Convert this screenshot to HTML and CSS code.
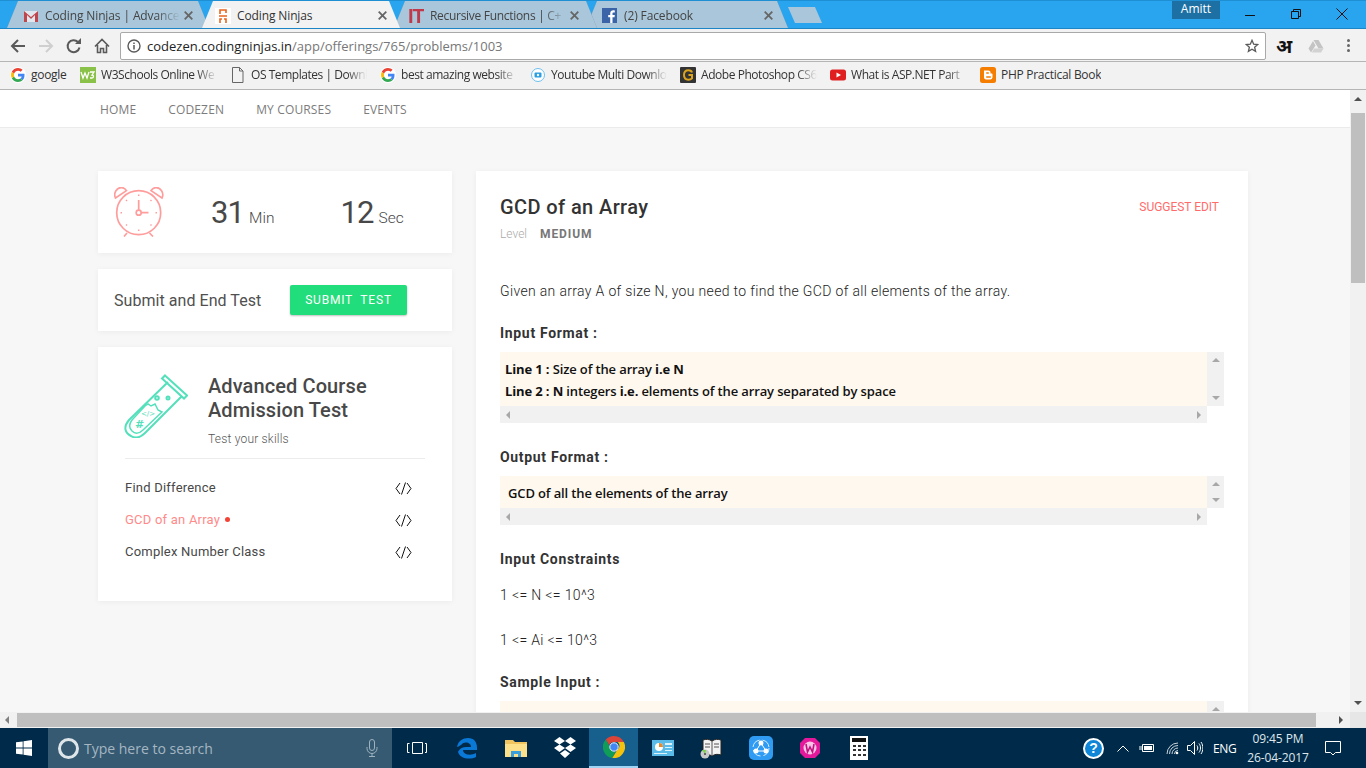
FILE: index.html
```html
<!DOCTYPE html>
<html lang="en">
<head>
    <meta charset="UTF-8">
    <meta name="viewport" content="width=device-width, initial-scale=1.0">
    <title>Coding Ninjas</title>
    <link rel="stylesheet" href="styles.css">
</head>
<body>
    <!-- browser title bar -->
    <div class="tabbar">
        <div class="tab tab-one">
            <svg class="favicon" viewBox="0 0 16 16"><path d="M1 3h14v11H1z" fill="#dfe8ee"/><path d="M1 14V3l7 6 7-6v11h-3V7L8 11 4 7v7z" fill="#c0464b"/></svg>
            <span class="tab-title">Coding Ninjas | Advance</span>
            <svg class="tab-close" viewBox="0 0 9 9"><path d="M.7.700l7.600 7.600M8.300.700L.7 8.300" stroke="#666" stroke-width="1.800"/></svg>
        </div>
        <div class="tab tab-two active">
            <svg class="favicon" viewBox="0 0 16 16"><rect width="16" height="16" fill="#fff"/><path d="M5 6V2h6v3M4 8h8M5 15v-4h2M11 15v-4H9" fill="none" stroke="#e8651f" stroke-width="1.600"/></svg>
            <span class="tab-title">Coding Ninjas</span>
            <svg class="tab-close" viewBox="0 0 9 9"><path d="M.7.700l7.600 7.600M8.300.700L.7 8.300" stroke="#666" stroke-width="1.800"/></svg>
        </div>
        <div class="tab tab-three">
            <span class="it-logo">IT</span>
            <span class="tab-title">Recursive Functions | C+</span>
            <svg class="tab-close" viewBox="0 0 9 9"><path d="M.7.700l7.600 7.600M8.300.700L.7 8.300" stroke="#666" stroke-width="1.800"/></svg>
        </div>
        <div class="tab tab-four">
            <svg class="favicon" viewBox="0 0 16 16"><rect width="15" height="15" fill="#3b64a8"/><path d="M10.500 15V9.200h2l.3-2.300h-2.300V5.500c0-.7.2-1.100 1.100-1.100h1.200v-2C12.500 2.300 11.900 2.300 11.300 2.300 9.500 2.300 8.200 3.400 8.200 5.300v1.600h-2v2.300h2V15z" fill="#fff"/></svg>
            <span class="tab-title">(2) Facebook</span>
            <svg class="tab-close" viewBox="0 0 9 9"><path d="M.7.700l7.600 7.600M8.300.700L.7 8.300" stroke="#666" stroke-width="1.800"/></svg>
        </div>
        <div class="new-tab"></div>
        <div class="profile">Amitt</div>
        <div class="window-controls">
            <svg viewBox="0 0 12 12"><path d="M1 7.500h10" stroke="#111" fill="none"/></svg>
            <svg viewBox="0 0 12 12"><path d="M1.500 3.500h7v7h-7zM3.500 3.500v-2h7v7h-2" stroke="#111" fill="none"/></svg>
            <svg viewBox="0 0 12 12"><path d="M.5.500l11 11M11.500.500l-11 11" stroke="#111" fill="none"/></svg>
        </div>
    </div>

    <!-- address bar -->
    <div class="toolbar">
        <svg class="tool" viewBox="0 0 16 16"><path d="M15 8H2M8 2L2 8l6 6" fill="none" stroke="#5a5a5a" stroke-width="2"/></svg>
        <svg class="tool" viewBox="0 0 16 16"><path d="M1 8h13M8 2l6 6-6 6" fill="none" stroke="#cfcfcf" stroke-width="2"/></svg>
        <svg class="tool" viewBox="0 0 16 16"><path d="M13.500 9.500A6 6 0 1 1 12 4" fill="none" stroke="#5a5a5a" stroke-width="2"/><path d="M9 6h6V0z" fill="#5a5a5a"/></svg>
        <svg class="tool" viewBox="0 0 16 16"><path d="M1 8.500L8 1.500l7 7M3.500 7v7.500h3v-4h3v4h3V7" fill="none" stroke="#5a5a5a" stroke-width="1.600"/></svg>
        <div class="omnibox">
            <svg class="info" viewBox="0 0 14 14"><circle cx="7" cy="7" r="6" fill="none" stroke="#5a5a5a" stroke-width="1.400"/><path d="M7 6v4.500M7 3.400v1.500" stroke="#5a5a5a" stroke-width="1.500"/></svg>
            <span class="url-host">codezen.codingninjas.in</span><span class="url-path">/app/offerings/765/problems/1003</span>
            <svg class="star" viewBox="0 0 16 16"><path d="M8 1.500l1.900 4.400 4.700.4-3.600 3.100 1.100 4.700L8 11.600l-4.100 2.500L5 9.400 1.400 6.300l4.700-.4z" fill="none" stroke="#5a5a5a" stroke-width="1.500"/></svg>
        </div>
        <span class="ext-hindi">अ</span>
        <svg class="ext-drive" viewBox="0 0 16 14"><path d="M5.500 1h5l5 8.500h-5zM5 2l2.500 4.500L3 13.500.5 9.500z" fill="#c4c4c4"/><path d="M3.800 13.500l2.400-4h9.300l-2.400 4z" fill="#d2d2d2"/></svg>
        <div class="menu-dots"><i></i><i></i><i></i></div>
    </div>

    <!-- bookmarks -->
    <div class="bookmarks">
        <a class="bookmark bm-google">
            <svg class="bm-icon" viewBox="0 0 16 16"><circle cx="8" cy="8" r="8" fill="#fff"/><path d="M14.500 8.200c0-.5 0-1-.1-1.400H8v2.700h3.700c-.2.900-.6 1.600-1.400 2.100l2.200 1.700c1.300-1.200 2-3 2-5.100z" fill="#4285f4"/><path d="M8 15c1.900 0 3.400-.6 4.500-1.700l-2.200-1.700c-.6.400-1.400.7-2.300.7-1.800 0-3.300-1.200-3.900-2.800L1.800 11.200C2.900 13.500 5.300 15 8 15z" fill="#34a853"/><path d="M4.100 9.500c-.3-.9-.3-2 0-2.900L1.800 4.800c-1 1.900-1 4.500 0 6.400z" fill="#fbbc05"/><path d="M8 3.800c1 0 1.900.4 2.600 1l2-2C11.400 1.700 9.800 1 8 1 5.300 1 2.900 2.500 1.800 4.800l2.300 1.800C4.700 5 6.200 3.800 8 3.800z" fill="#ea4335"/></svg>
            <span class="bm-text">google</span>
        </a>
        <a class="bookmark">
            <svg class="bm-icon" viewBox="0 0 16 16"><rect width="16" height="16" fill="#8ac249"/><path d="M1 5l2 6 2-5 2 5 2-6M10 5h4l-2 3c2 0 2 3 0 3h-2" fill="none" stroke="#fff" stroke-width="1.300"/></svg>
            <span class="bm-text fade">W3Schools Online We</span>
        </a>
        <a class="bookmark">
            <svg class="bm-icon" viewBox="0 0 16 16"><path d="M2.500 .5h7l3.500 3.500v11.500H2.500zM9.500 .5V4H13" fill="none" stroke="#666"/></svg>
            <span class="bm-text fade">OS Templates | Downl</span>
        </a>
        <a class="bookmark">
            <svg class="bm-icon" viewBox="0 0 16 16"><circle cx="8" cy="8" r="8" fill="#fff"/><path d="M14.500 8.200c0-.5 0-1-.1-1.400H8v2.700h3.700c-.2.900-.6 1.600-1.400 2.100l2.200 1.700c1.300-1.200 2-3 2-5.100z" fill="#4285f4"/><path d="M8 15c1.900 0 3.400-.6 4.500-1.700l-2.200-1.700c-.6.400-1.400.7-2.300.7-1.800 0-3.300-1.200-3.900-2.800L1.800 11.200C2.900 13.500 5.300 15 8 15z" fill="#34a853"/><path d="M4.100 9.500c-.3-.9-.3-2 0-2.900L1.800 4.800c-1 1.900-1 4.500 0 6.400z" fill="#fbbc05"/><path d="M8 3.800c1 0 1.900.4 2.600 1l2-2C11.400 1.700 9.800 1 8 1 5.300 1 2.900 2.500 1.800 4.800l2.300 1.800C4.700 5 6.200 3.800 8 3.800z" fill="#ea4335"/></svg>
            <span class="bm-text fade">best amazing website</span>
        </a>
        <a class="bookmark">
            <svg class="bm-icon" viewBox="0 0 16 16"><circle cx="8" cy="8" r="6.500" fill="#fff" stroke="#6cc0ef"/><rect x="4.500" y="5.500" width="7" height="5" rx="1" fill="#2a9fe0"/><circle cx="8" cy="8" r="1.200" fill="#fff"/></svg>
            <span class="bm-text fade">Youtube Multi Downlo</span>
        </a>
        <a class="bookmark">
            <svg class="bm-icon" viewBox="0 0 16 16"><rect width="16" height="16" rx="1" fill="#333"/><path d="M12 5.500C11.500 4 10.300 3.300 8.500 3.300 5.800 3.300 4 5.200 4 8s1.700 4.700 4.400 4.700c1.500 0 2.800-.5 3.600-1.300V8H8.500" fill="none" stroke="#dca31f" stroke-width="2"/></svg>
            <span class="bm-text fade">Adobe Photoshop CS6</span>
        </a>
        <a class="bookmark">
            <svg class="bm-icon" viewBox="0 0 16 16"><rect y="2.500" width="16" height="11" rx="2.500" fill="#e02020"/><path d="M6.500 5.500L11 8l-4.500 2.500z" fill="#fff"/></svg>
            <span class="bm-text fade">What is ASP.NET Part</span>
        </a>
        <a class="bookmark">
            <svg class="bm-icon" viewBox="0 0 16 16"><rect width="16" height="16" rx="2.500" fill="#f57d00"/><path d="M4 3.500h4.500c1 0 2 .8 2 1.800v1.200h1c.5 0 1 .3 1 .8v3c0 1.100-.9 2.200-2.200 2.200H6c-1.200 0-2-.9-2-2.200z" fill="#fff"/><path d="M6.200 6h2.600M6.200 10h4.600" stroke="#f57d00" stroke-width="1.300"/></svg>
            <span class="bm-text">PHP Practical Book</span>
        </a>
    </div>

    <!-- page area with its scrollbars -->
    <div class="viewport">
        <div class="page">
            <nav class="site-nav">
                <a>HOME</a>
                <a>CODEZEN</a>
                <a>MY COURSES</a>
                <a>EVENTS</a>
            </nav>
            <div class="content">
                <aside class="sidebar">
                    <div class="card timer-card">
                        <svg class="clock" viewBox="0 0 50 50" fill="none" stroke="#ff9d9d" stroke-width="1.700">
                            <circle cx="24.700" cy="25.700" r="22"/>
                            <path d="M1.500 11C-1 6 3 0 8 .6c2 .2 3.500 1.500 4.500 3zM48 11c2.500-5-1.500-11-6.500-10.400-2 .2-3.500 1.500-4.500 3zM13 46l-3 3.500M35.500 46l3.500 3.500M24.700 13v10M27 25.700h7.500"/>
                            <circle cx="24.700" cy="25.700" r="2.500"/>
                            <path d="M24.700 7.500v1.500M24.700 42.500v1.500M6.500 25.700H8M41.500 25.700H43M12 13l1 1M37.500 13l-1 1M12 38.500l1-1M37.500 38.500l-1-1" stroke-width="1.500"/>
                        </svg>
                        <div class="timer-values">
                            <span class="count">31</span><span class="unit">Min</span>
                            <span class="count count-sec">12</span><span class="unit">Sec</span>
                        </div>
                    </div>
                    <div class="card submit-card">
                        <span class="submit-label">Submit and End Test</span>
                        <button class="submit-btn">SUBMIT&nbsp; TEST</button>
                    </div>
                    <div class="card course-card">
                        <div class="course-head">
                            <svg class="tube" viewBox="0 0 64 64" fill="none" stroke="#54e0bb" stroke-width="2">
                                <path d="M41 1.500l22 20-3 3-22-20zM44 8L5 46C-1 53 1 59 7 62c5 3 10 1 14-3l37-37"/>
                                <path d="M8 46l13-14 3-2 3 2 4-2 3 6 4 2-19 18c-4 4-8 4-11 1-3-3-3-7 0-11z" stroke-width="1.500"/>
                                <circle cx="33" cy="24" r="1.800"/><circle cx="44" cy="24" r="1.500"/>
                                <text class="tube-mark" x="11" y="54">#</text>
                                <text class="tube-code" x="17" y="42">&lt;/&gt;</text>
                            </svg>
                            <div>
                                <h2 class="course-title">Advanced Course Admission Test</h2>
                                <p class="course-sub">Test your skills</p>
                            </div>
                        </div>
                        <ul class="problem-list">
                            <li><span>Find Difference</span><svg class="code-mark" viewBox="0 0 17 13"><path d="M5 1L1 6.500 5 12M10.500 .5L6.500 12.500M12 1l4 5.500-4 5.500" fill="none" stroke="#111"/></svg></li>
                            <li class="current"><span>GCD of an Array <i class="dot"></i></span><svg class="code-mark" viewBox="0 0 17 13"><path d="M5 1L1 6.500 5 12M10.500 .5L6.500 12.500M12 1l4 5.500-4 5.500" fill="none" stroke="#111"/></svg></li>
                            <li><span>Complex Number Class</span><svg class="code-mark" viewBox="0 0 17 13"><path d="M5 1L1 6.500 5 12M10.500 .5L6.500 12.500M12 1l4 5.500-4 5.500" fill="none" stroke="#111"/></svg></li>
                        </ul>
                    </div>
                </aside>

                <main class="card problem">
                    <div class="problem-head">
                        <h1>GCD of an Array</h1>
                        <a class="suggest">SUGGEST EDIT</a>
                    </div>
                    <div class="level"><span class="level-label">Level</span><span class="level-value">MEDIUM</span></div>
                    <p class="statement">Given an array A of size N, you need to find the GCD of all elements of the array.</p>

                    <h3 class="heading">Input Format :</h3>
                    <div class="code-box">
                        <div class="code-text tall">
                            <div><b>Line 1 :</b> Size of the array <b>i.e N</b></div>
                            <div><b>Line 2 : N</b> integers <b>i.e.</b> elements of the array separated by space</div>
                        </div>
                        <div class="vbar"><i class="arrow up"></i><i class="arrow down"></i></div>
                        <div class="hbar"><i class="arrow left"></i><i class="arrow right"></i></div>
                    </div>

                    <h3 class="heading">Output Format :</h3>
                    <div class="code-box">
                        <div class="code-text wide-pad">GCD of all the elements of the array</div>
                        <div class="vbar"><i class="arrow up"></i><i class="arrow down"></i></div>
                        <div class="hbar"><i class="arrow left"></i><i class="arrow right"></i></div>
                    </div>

                    <h3 class="heading">Input Constraints</h3>
                    <p class="constraint first">1 &lt;= N &lt;= 10^3</p>
                    <p class="constraint second">1 &lt;= Ai &lt;= 10^3</p>

                    <h3 class="heading sample">Sample Input :</h3>
                    <div class="code-box">
                        <div class="code-text tall"></div>
                        <div class="vbar"><i class="arrow up"></i><i class="arrow down"></i></div>
                    </div>
                </main>
            </div>
        </div>
        <div class="vscroll">
            <i class="arrow up dark"></i>
            <div class="vthumb"></div>
            <i class="arrow down dark"></i>
        </div>
    </div>
    <div class="hscroll">
        <i class="arrow left dark"></i>
        <div class="hthumb"></div>
        <i class="arrow right dark"></i>
        <div class="corner"></div>
    </div>

    <!-- windows taskbar -->
    <div class="taskbar">
        <div class="start">
            <svg viewBox="0 0 16 16" width="16" height="16"><path d="M0 2.300l6.700-.9v6.200H0zM7.500 1.300L16 0v7.600H7.500zM0 8.400h6.700v6.200L0 13.700zM7.500 8.400H16V16l-8.500-1.200z" fill="#fff"/></svg>
        </div>
        <div class="search">
            <span class="cortana"></span>
            <span class="search-text">Type here to search</span>
            <svg class="mic" viewBox="0 0 12 18" fill="none" stroke="#9fb2bf"><rect x="3.500" y=".5" width="5" height="11" rx="2.500"/><path d="M1 8v1.500a5 5 0 0 0 10 0V8M6 14.500v3M3 17.500h6"/></svg>
        </div>
        <div class="task-view">
            <svg viewBox="0 0 20 14" width="20" height="14" fill="none" stroke="#fff"><path d="M5.500 1.500h10v11h-10zM2.500 2.500H.5v9h2M18 2.500h1.500v9H18"/></svg>
        </div>
        <div class="task-icon">
            <svg viewBox="0 0 22 22" width="22" height="22"><path d="M1 10C2 4 7 1 12 1c6 0 9 4 9 10v2H7c0 5 8 6 13 3v4c-6 3-16 2-18-5 0 0 2-5 8-5h5c0-5-7-6-10-2-2 1-3 2-4 2z" fill="#0a78d7"/></svg>
        </div>
        <div class="task-icon">
            <svg viewBox="0 0 22 20" width="22" height="20"><path d="M0 2h8l2 2h12v15H0z" fill="#f0c45f"/><path d="M0 6h22v13H0z" fill="#fde08a"/><path d="M6 19v-6h10v6h-3v-3H9v3z" fill="#3a9fdc"/></svg>
        </div>
        <div class="task-icon">
            <svg viewBox="0 0 24 22" width="24" height="22"><path d="M6.500 0L12 4 6.500 7.500 1 4zM17.500 0L23 4l-5.500 3.500L12 4zM6.500 15L1 11l5.500-3.500L12 11zM17.500 15L12 11l5.500-3.500L23 11zM12 13l5 3.500L12 21l-5-4.500z" fill="#fff"/></svg>
        </div>
        <div class="task-icon running">
            <svg viewBox="0 0 22 22" width="22" height="22"><path d="M11 0a11 11 0 0 1 9.800 6H11a5 5 0 0 0-4.800 3.300L2.800 3.600A11 11 0 0 1 11 0z" fill="#db4437"/><path d="M2.800 3.600l4.300 7.700a5 5 0 0 0 5.500 4.500L9.300 21.900A11 11 0 0 1 2.800 3.600z" fill="#0f9d58"/><path d="M20.800 6A11 11 0 0 1 9.300 21.900l4.900-7.900A5 5 0 0 0 14.800 6z" fill="#f4c20d"/><circle cx="11" cy="11" r="4.200" fill="#4285f4" stroke="#e8eef5"/></svg>
        </div>
        <div class="task-icon">
            <svg viewBox="0 0 22 16" width="22" height="16"><rect width="22" height="16" fill="#5bbbe8"/><circle cx="7" cy="7" r="4" fill="#fff"/><path d="M7 7V3a4 4 0 0 1 4 4z" fill="#e88a2e"/><path d="M13 3h7v2h-7zM13 7h7v1h-7zM13 10h7v1h-7zM2 13h13v1H2z" fill="#dff3fc"/></svg>
        </div>
        <div class="task-icon">
            <svg viewBox="0 0 24 24" width="24" height="24"><path d="M3 4c3-1 6-1 9 1 3-2 6-2 9-1v15c-3-1-6-1-9 1-3-2-6-2-9-1z" fill="#f3f3f3" stroke="#222"/><path d="M12 5v15M5 8h5M5 11h5M14 8h5M14 11h5" stroke="#555"/><circle cx="5" cy="18" r="4.500" fill="#c9c9c9"/><path d="M5 18L2 14h4z" fill="#7ed04a"/><circle cx="5" cy="18" r="1" fill="#444"/></svg>
        </div>
        <div class="task-icon">
            <svg viewBox="0 0 24 24" width="24" height="24"><rect width="24" height="24" rx="5" fill="#2f9bf2"/><circle cx="12" cy="12" r="8" fill="none" stroke="#d5ecff" stroke-dasharray="10 3"/><circle cx="12" cy="7" r="2.500" fill="#fff"/><circle cx="7" cy="15" r="2.500" fill="#fff"/><circle cx="17" cy="15" r="2.500" fill="#fff"/><path d="M12 7L7 15h10z" fill="none" stroke="#fff"/></svg>
        </div>
        <div class="task-icon">
            <svg viewBox="0 0 22 22" width="22" height="22"><path d="M6 1h10l5 5v10l-5 5H6l-5-5V6z" fill="#e5179b"/><circle cx="11" cy="11" r="6.500" fill="#f9c4e5"/><path d="M7 7l1.500 8L11 10l2.500 5L15 7" fill="none" stroke="#c2107f" stroke-width="1.600"/></svg>
        </div>
        <div class="task-icon">
            <svg viewBox="0 0 18 24" width="18" height="24"><rect width="18" height="24" fill="#fff"/><rect x="2" y="2" width="14" height="4" fill="#111"/><path d="M3 9h3v2H3zM8 9h3v2H8zM13 9h3v2h-3zM3 13h3v2H3zM8 13h3v2H8zM13 13h3v2h-3zM3 18h3v2H3zM8 18h3v2H8zM13 18h3v2h-3z" fill="#333"/></svg>
        </div>

        <div class="tray">
            <span class="tray-help">?</span>
            <svg class="tray-up" viewBox="0 0 12 7"><path d="M.5 6.500L6 1l5.500 5.500" fill="none" stroke="#fff"/></svg>
            <svg class="tray-battery" viewBox="0 0 16 10" fill="none" stroke="#fff"><path d="M3.500 1.500h11v7h-11zM0 4h3M0 6h3"/><rect x="5" y="3" width="8" height="4" fill="#fff" stroke="none"/></svg>
            <svg class="tray-wifi" viewBox="0 0 14 13" fill="none" stroke="#c8d3da"><path d="M1 12A11 11 0 0 1 12 1M3.500 12A8.500 8.500 0 0 1 12 3.500M6 12A6 6 0 0 1 12 6M8.500 12A3.500 3.500 0 0 1 12 8.500"/><circle cx="11" cy="11" r="1.300" fill="#fff" stroke="none"/></svg>
            <svg class="tray-sound" viewBox="0 0 16 14" fill="none" stroke="#fff"><path d="M.5 4.500h3l4-4v13l-4-4h-3zM10 4.500c1 1.500 1 3.500 0 5M12 2.500c2 2.500 2 6.500 0 9M14 1c2.500 3.500 2.500 8.500 0 12"/></svg>
            <span class="tray-lang">ENG</span>
            <div class="tray-clock"><span>09:45 PM</span><span>26-04-2017</span></div>
            <svg class="tray-note" viewBox="0 0 16 15" fill="none" stroke="#fff"><path d="M.5.500h15v11h-5l-2.500 2.500-2.500-2.500h-5z"/></svg>
        </div>
    </div>
</body>
</html>
```

FILE: styles.css
```css
* { box-sizing: border-box; }
html, body { height: 100%; }
body { margin: 0; width: 1366px; height: 768px; overflow: hidden; display: flex; flex-direction: column; font-family: Roboto, sans-serif; background: #f7f7f7; color: #484848; }
h1, h2, h3, p, ul { margin: 0; padding: 0; }
ul { list-style: none; }
i { display: block; }

/* browser tabs */
.tabbar { height: 29px; flex: none; display: flex; align-items: flex-end; background: #29a5f0; border-top: 1px solid #1f8fd3; border-bottom: 1px solid #1c85c6; padding-left: 7px; font-family: "Open Sans", sans-serif; font-size: 12px; color: #444; }
.tab { height: 27px; display: flex; align-items: center; position: relative; padding-top: 2px; filter: drop-shadow(0 0 .5px #6d8ba0); }
.tab::before { content: ""; position: absolute; inset: 0; z-index: -1; background: #a9c6da; clip-path: polygon(0 100%, 11px 0, calc(100% - 11px) 0, 100% 100%); }
.tab-one { width: 202px; padding-left: 16px; padding-right: 16px; z-index: 1; }
.tab-two { width: 198px; margin-left: -7px; padding-left: 13px; padding-right: 13px; z-index: 3; }
.tab-three { width: 203px; margin-left: -6px; padding-left: 14px; padding-right: 18px; z-index: 2; }
.tab-four { width: 202px; margin-left: -11px; padding-left: 16px; padding-right: 15px; z-index: 1; }
.active { color: #333; filter: none; }
.active::before { background: #f2f2f2; }
.favicon { width: 16px; height: 16px; flex: none; }
.it-logo { width: 16px; flex: none; font: bold 20px/16px "Liberation Sans", sans-serif; color: #c0394b; letter-spacing: -1px; overflow: hidden; }
.tab-title { flex: 1; margin-left: 6px; white-space: nowrap; overflow: hidden; letter-spacing: -.12px; }
.tab-three .tab-title { letter-spacing: -.3px; }
.tab-one .tab-title, .tab-three .tab-title { -webkit-mask-image: linear-gradient(to left, transparent 0, #000 24px); mask-image: linear-gradient(to left, transparent 0, #000 24px); }
.tab-close { width: 9px; height: 9px; flex: none; margin-left: 4px; }
.new-tab { width: 34px; height: 16px; margin-bottom: 5px; background: #a9c6da; clip-path: polygon(0 0, calc(100% - 7px) 0, 100% 100%, 7px 100%); }
.profile { align-self: flex-start; width: 48px; height: 18px; margin-left: 350px; background: #1d70a3; color: #fff; text-align: center; line-height: 16px; }
.window-controls { align-self: flex-start; display: flex; margin-left: 24px; padding-top: 7px; gap: 34px; }
.window-controls svg { width: 12px; height: 12px; }

/* address bar */
.toolbar { height: 33px; flex: none; display: flex; align-items: center; background: #f2f2f2; padding-left: 10px; }
.tool { width: 16px; height: 16px; margin-right: 12px; flex: none; }
.omnibox { width: 1146px; height: 28px; margin-left: -2px; background: #fff; border: 1px solid #a9a9a9; border-radius: 2px; display: flex; align-items: center; padding: 1px 6px 0; font-family: "Open Sans", sans-serif; font-size: 13px; }
.info { width: 14px; height: 14px; margin-right: 6px; flex: none; }
.url-host { color: #222; }
.url-path { color: #777; }
.star { width: 14px; height: 14px; margin-left: auto; }
.ext-hindi { margin-left: 10px; width: 17px; font: bold 19px/20px "Noto Sans", "DejaVu Sans", sans-serif; color: #111; }
.ext-drive { width: 16px; height: 14px; margin-left: 15px; }
.menu-dots { margin-left: 23px; display: flex; flex-direction: column; gap: 2px; }
.menu-dots i { width: 3px; height: 3px; border-radius: 50%; background: #666; }

/* bookmarks */
.bookmarks { height: 29px; flex: none; display: flex; align-items: center; background: #f2f2f2; border-top: 1px solid #b5b5b5; border-bottom: 1px solid #b5b5b5; padding: 0 0 2px 10px; font-family: "Open Sans", sans-serif; font-size: 12px; letter-spacing: -.28px; color: #333; margin-top: -1px; }
.bookmark { width: 150px; display: flex; align-items: center; white-space: nowrap; flex: none; }
.bm-icon { width: 16px; height: 16px; flex: none; margin-right: 5px; }
.bm-text { display: block; overflow: hidden; }
.fade { width: 116px; letter-spacing: -.45px; -webkit-mask-image: linear-gradient(to left, transparent 0, #000 20px); mask-image: linear-gradient(to left, transparent 0, #000 20px); }
.bm-google { width: 70px; }

/* page */
.viewport { flex: 1; display: flex; min-height: 0; }
.page { flex: 1; overflow: hidden; }
.site-nav { height: 38px; display: flex; align-items: center; gap: 32px; padding: 2px 0 0 100px; background: #fff; border-bottom: 1px solid #ebebeb; font-family: "Open Sans", sans-serif; font-size: 12px; letter-spacing: .15px; color: #7c7c7c; }
.content { display: flex; align-items: flex-start; gap: 24px; padding: 43px 0 0 98px; }
.card { background: #fff; box-shadow: 0 1px 6px rgba(0, 0, 0, .05); }
.sidebar { width: 354px; display: flex; flex-direction: column; gap: 16px; }

.timer-card { height: 82px; display: flex; align-items: flex-start; padding: 16px 0 0 16px; }
.clock { width: 50px; height: 50px; flex: none; }
.timer-values { display: flex; align-items: baseline; margin: 7px 0 0 47px; }
.count { font-size: 31px; color: #484848; letter-spacing: -.9px; }
.count-sec { margin-left: 66px; }
.unit { font-size: 15.500px; font-weight: 300; margin-left: 5px; color: #484848; }

.submit-card { height: 62px; display: flex; align-items: center; padding-left: 16px; }
.submit-label { font-size: 16px; width: 176px; letter-spacing: .05px; color: #505050; }
.submit-btn { width: 117px; height: 30px; border: none; border-radius: 2px; background: #22dd7b; color: #fff; font: 12px Roboto, sans-serif; letter-spacing: .8px; box-shadow: 0 1px 2px rgba(0, 0, 0, .25); }

.course-card { height: 254px; padding: 27px 27px 0; }
.course-head { display: flex; gap: 19px; padding-bottom: 11px; border-bottom: 1px solid #ececec; }
.tube { width: 64px; height: 64px; flex: none; margin-left: -1px; margin-right: 1px; }
.tube-mark { font: 700 11px "DejaVu Sans", sans-serif; fill: #54e0bb; stroke: none; }
.tube-code { font: 7px "DejaVu Sans", sans-serif; fill: #54e0bb; stroke: none; }
.course-title { width: 180px; font-size: 20px; font-weight: 500; line-height: 24px; color: #484848; letter-spacing: .1px; }
.course-sub { font-size: 12px; font-weight: 300; margin-top: 9px; line-height: 16px; color: #555; letter-spacing: .2px; }
.problem-list { margin-top: 12px; }
.problem-list li { height: 32px; display: flex; align-items: center; justify-content: space-between; padding-right: 13px; font-size: 13px; letter-spacing: .22px; }
.current { color: #ff8a8a; }
.dot { display: inline-block; width: 5px; height: 5px; margin-left: 1px; border-radius: 50%; background: #f44336; vertical-align: 2px; }
.code-mark { width: 17px; height: 13px; flex: none; margin-top: 2px; }

.problem { width: 772px; height: 600px; padding: 24px 24px 0; }
.problem-head { display: flex; justify-content: space-between; align-items: center; padding-right: 5px; }
.problem-head h1 { font-size: 20px; font-weight: 500; line-height: 24px; color: #333; letter-spacing: .4px; }
.suggest { font-size: 12px; color: #ff6b6b; letter-spacing: -.03px; }
.level { margin-top: 7px; font-size: 12px; line-height: 16px; }
.level-label { color: #aaa; font-weight: 300; }
.level-value { margin-left: 13px; font-weight: 700; color: #777; letter-spacing: .9px; }
.statement { margin-top: 39px; font-size: 14px; line-height: 20px; font-weight: 300; color: #222; letter-spacing: .34px; }
.heading { margin-top: 24px; font-size: 14px; font-weight: 700; line-height: 20px; color: #333; letter-spacing: .68px; }
.statement + .heading, .sample { margin-top: 22px; }
.code-box { width: 724px; margin-top: 9px; display: grid; grid-template-columns: 707px 17px; font-family: "Open Sans", sans-serif; font-size: 13px; font-weight: 600; letter-spacing: -.13px; color: #111; }
.code-text { background: #fff8ef; padding: 6px 0 0 5px; line-height: 22px; height: 32px; }
.code-text b { font-weight: 700; }
.code-text.tall { height: 54px; }
.code-text.wide-pad { padding-left: 8px; }
.vbar { background: #f1f1f1; display: flex; flex-direction: column; justify-content: space-between; align-items: center; padding: 6px 0; }
.hbar { height: 17px; background: #f1f1f1; display: flex; justify-content: space-between; align-items: center; padding: 0 6px; }
.constraint { font-size: 14px; line-height: 20px; font-weight: 300; color: #222; letter-spacing: .35px; }
.first { margin-top: 16px; }
.second { margin-top: 25px; }

/* scrollbars */
.arrow { width: 0; height: 0; flex: none; border: 4px solid transparent; }
.up { border-top: 0; border-bottom-color: #a8a8a8; }
.down { border-bottom: 0; border-top-color: #a8a8a8; }
.left { border-left: 0; border-right-color: #a8a8a8; }
.right { border-right: 0; border-left-color: #a8a8a8; }
.up.dark { border-bottom-color: #505050; }
.down.dark { border-top-color: #505050; }
.left.dark { border-right-color: #808080; }
.right.dark { border-left-color: #505050; }
.vscroll { width: 16px; flex: none; background: #f1f1f1; display: flex; flex-direction: column; align-items: center; padding: 7px 0; }
.vthumb { width: 14px; height: 170px; margin-top: 12px; margin-bottom: auto; background: #bfbfbf; }
.hscroll { height: 16px; flex: none; display: flex; align-items: center; background: #f1f1f1; padding-left: 5px; }
.hthumb { width: 1299px; height: 14px; margin-left: 8px; background: #bfbfbf; }
.hscroll .right { margin-left: 23px; }
.corner { width: 16px; height: 16px; margin-left: auto; background: #e6e6e6; }

/* taskbar */
.taskbar { height: 40px; flex: none; display: flex; align-items: center; background: #002a49; font-family: "Open Sans", sans-serif; color: #fff; }
.start { width: 48px; height: 40px; display: flex; align-items: center; justify-content: center; }
.search { width: 344px; height: 40px; display: flex; align-items: center; background: #355a72; padding-left: 10px; }
.cortana { width: 21px; height: 21px; flex: none; border: 3px solid #dfe6ea; border-radius: 50%; }
.search-text { margin-left: 5px; font-size: 14px; color: #a5b6c2; }
.mic { width: 12px; height: 18px; margin-left: auto; margin-right: 14px; }
.task-view { width: 50px; display: flex; justify-content: center; }
.task-icon { width: 49px; height: 40px; display: flex; align-items: center; justify-content: center; }
.running { background: #17608d; border-bottom: 2px solid #9fd4f5; }
.tray { margin-left: auto; display: flex; align-items: center; padding-right: 25px; }
.tray-help { width: 21px; height: 21px; border: 2px solid #fff; border-radius: 50%; background: #0f86d8; color: #fff; font: bold 14px/17px "Liberation Sans", sans-serif; text-align: center; }
.tray-up { width: 12px; height: 7px; margin-left: 13px; }
.tray-battery { width: 16px; height: 10px; margin-left: 10px; }
.tray-wifi { width: 14px; height: 13px; margin-left: 11px; }
.tray-sound { width: 16px; height: 14px; margin-left: 7px; }
.tray-lang { width: 23px; font-size: 12px; letter-spacing: -.3px; margin-left: 10px; white-space: nowrap; }
.tray-clock { width: 58px; display: flex; flex-direction: column; align-items: center; margin-left: 13px; font-size: 12px; line-height: 19px; letter-spacing: -.1px; color: #dfe7ec; white-space: nowrap; }
.tray-note { width: 16px; height: 15px; margin-left: 18px; }
```
